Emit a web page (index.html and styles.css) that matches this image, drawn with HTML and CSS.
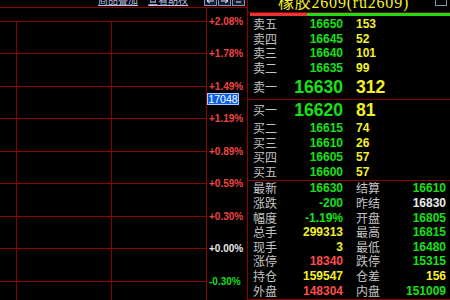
FILE: index.html
```html
<!DOCTYPE html>
<html lang="zh-CN">
<head>
<meta charset="utf-8">
<title>橡胶2609</title>
<link rel="stylesheet" href="styles.css">
</head>
<body>
<div class="app">
  <div class="left">
    <div class="toolbar">
      <a class="tlink">商品叠加</a>
      <a class="tlink">查看期权</a>
      <div class="tbtns">
        <span class="tbtn"><svg width="11" height="10" viewBox="0 0 11 10"><path d="M2 6h7M2 6l3-2M2 6l3 2" stroke="#e8ecf8" fill="none"/></svg></span>
        <span class="tbtn"><svg width="11" height="10" viewBox="0 0 11 10"><path d="M2 6h7M9 6l-3-2M9 6l-3 2" stroke="#e8ecf8" fill="none"/></svg></span>
        <span class="tbtn"><svg width="11" height="10" viewBox="0 0 11 10"><path d="M3 7h5" stroke="#e8ecf8" fill="none"/></svg></span>
      </div>
    </div>
    <div class="chart">
      <div class="plot">
        <svg width="206" height="292" viewBox="0 0 206 292" shape-rendering="crispEdges">
          <g stroke="#8c0000" stroke-width="1">
            <line x1="0" y1="13.5" x2="206" y2="13.5"/>
            <line x1="0" y1="45.5" x2="206" y2="45.5"/>
            <line x1="0" y1="78.5" x2="206" y2="78.5"/>
            <line x1="0" y1="110.5" x2="206" y2="110.5"/>
            <line x1="0" y1="143.5" x2="206" y2="143.5"/>
            <line x1="0" y1="175.5" x2="206" y2="175.5"/>
            <line x1="0" y1="208.5" x2="206" y2="208.5"/>
            <line x1="0" y1="240.5" x2="206" y2="240.5"/>
            <line x1="0" y1="273.5" x2="206" y2="273.5"/>
            <line x1="16.5" y1="13.5" x2="16.5" y2="292"/>
            <line x1="111.5" y1="13.5" x2="111.5" y2="292"/>
          </g>
        </svg>
      </div>
      <div class="axis">
        <span class="ax up">+2.08%</span>
        <span class="ax up">+1.78%</span>
        <span class="ax up">+1.49%</span>
        <span class="ax up">+1.19%</span>
        <span class="ax up">+0.89%</span>
        <span class="ax up">+0.59%</span>
        <span class="ax up">+0.30%</span>
        <span class="ax flat">+0.00%</span>
        <span class="ax down">-0.30%</span>
      </div>
      <div class="cross">17048</div>
    </div>
  </div>

  <div class="right">
    <div class="title">
      <span class="title-text">橡胶2609(ru2609)</span>
      <svg class="title-icon" width="12" height="12" viewBox="0 0 12 12"><rect x="0.5" y="0.5" width="11" height="11" fill="none" stroke="#8a94b0"/><rect x="2.5" y="0.5" width="7" height="4" fill="none" stroke="#8a94b0"/></svg>
    </div>
    <div class="bar"><div class="bar-red" style="width:57px"></div><div class="bar-green"></div></div>

    <div class="book sell">
      <div class="row"><span class="lbl">卖五</span><span class="price">16650</span><span class="vol">153</span></div>
      <div class="row"><span class="lbl">卖四</span><span class="price">16645</span><span class="vol">52</span></div>
      <div class="row"><span class="lbl">卖三</span><span class="price">16640</span><span class="vol">101</span></div>
      <div class="row"><span class="lbl">卖二</span><span class="price">16635</span><span class="vol">99</span></div>
      <div class="row big sell1"><span class="lbl">卖一</span><span class="price">16630</span><span class="vol">312</span></div>
    </div>

    <div class="book buy">
      <div class="row big buy1"><span class="lbl">买一</span><span class="price">16620</span><span class="vol">81</span></div>
      <div class="row"><span class="lbl">买二</span><span class="price">16615</span><span class="vol">74</span></div>
      <div class="row"><span class="lbl">买三</span><span class="price">16610</span><span class="vol">26</span></div>
      <div class="row"><span class="lbl">买四</span><span class="price">16605</span><span class="vol">57</span></div>
      <div class="row"><span class="lbl">买五</span><span class="price">16600</span><span class="vol">57</span></div>
    </div>

    <div class="stats">
      <span class="lbl">最新</span><span class="val g">16630</span><span class="lbl l2">结算</span><span class="val g">16610</span>
      <span class="lbl">涨跌</span><span class="val g">-200</span><span class="lbl l2">昨结</span><span class="val w">16830</span>
      <span class="lbl">幅度</span><span class="val g">-1.19%</span><span class="lbl l2">开盘</span><span class="val g">16805</span>
      <span class="lbl">总手</span><span class="val y">299313</span><span class="lbl l2">最高</span><span class="val g">16815</span>
      <span class="lbl">现手</span><span class="val y">3</span><span class="lbl l2">最低</span><span class="val g">16480</span>
      <span class="lbl">涨停</span><span class="val r">18340</span><span class="lbl l2">跌停</span><span class="val g">15315</span>
      <span class="lbl">持仓</span><span class="val y">159547</span><span class="lbl l2">仓差</span><span class="val y">156</span>
      <span class="lbl">外盘</span><span class="val r">148304</span><span class="lbl l2">内盘</span><span class="val g">151009</span>
    </div>
  </div>
</div>
</body>
</html>
```

FILE: styles.css
```css
* { box-sizing: border-box; }

body {
  margin: 0;
  background: #000;
  width: 450px;
  height: 300px;
  overflow: hidden;
  font-family: "Liberation Sans", "Noto Sans CJK SC", sans-serif;
}

.app {
  display: flex;
  height: 300px;
}

/* ---------- left: chart ---------- */
.left {
  width: 247px;
  display: flex;
  flex-direction: column;
}

.toolbar {
  height: 8px;
  border-bottom: 1px solid #8c0000;
  display: flex;
  align-items: flex-end;
  gap: 10px;
  padding: 0 2px 1px 98px;
  overflow: hidden;
}

.tlink {
  display: block;
  font: 10px/12px "Noto Sans CJK SC", sans-serif;
  color: #b4c0e4;
  text-decoration: underline;
  white-space: nowrap;
}

.tbtns {
  margin-left: auto;
  display: flex;
  gap: 1px;
}

.tbtn {
  width: 13px;
  height: 12px;
  border: 1px solid #8a94b0;
  background: #141c38;
  display: flex;
  align-items: flex-end;
  justify-content: center;
}

.tbtn svg { display: block; }

.chart {
  position: relative;
  flex: 1;
  display: flex;
}

.plot {
  width: 207px;
  border-right: 1px solid #8c0000;
}

.plot svg { display: block; }

.axis {
  width: 40px;
  display: flex;
  flex-direction: column;
  gap: 20.44px;
  padding: 8px 0 0 2px;
}

.ax {
  display: block;
  height: 12px;
  font: bold 10px/12px "Liberation Sans", sans-serif;
}

.ax.up { color: #f04444; }
.ax.flat { color: #e8e8e8; }
.ax.down { color: #18dc18; }

.cross {
  position: absolute;
  left: 207px;
  top: 85px;
  width: 32px;
  height: 12px;
  background: #0c5ee0;
  border: 1px solid #a8c8ff;
  color: #fff;
  font: 10.5px/10px "Liberation Sans", sans-serif;
  text-align: center;
}

/* ---------- right: quote panel ---------- */
.right {
  flex: 1;
  border-left: 1px solid #8c0000;
  display: flex;
  flex-direction: column;
}

.title {
  height: 13px;
  border-bottom: 1px solid #8c0000;
  display: flex;
  overflow: hidden;
  padding: 0 3px 0 4px;
}

.title-text {
  flex: 1;
  text-align: center;
  font: 16px/16px "Liberation Serif", "Noto Sans CJK SC", serif;
  letter-spacing: 0.8px;
  color: #f4f028;
  margin-top: -5px;
  white-space: nowrap;
}

.title-icon {
  display: block;
  margin-top: -6px;
}

.bar {
  height: 3px;
  display: flex;
  margin-left: 2px;
}

.bar-red { background: #e83434; }
.bar-green { flex: 1; background: #14e014; }

.book {
  display: flex;
  flex-direction: column;
  border-bottom: 1px solid #8c0000;
}

.sell { padding-top: 0.67px; }
.buy { padding-bottom: 0.67px; }

.row {
  height: 14.67px;
  display: grid;
  grid-template-columns: 40px 50px 1fr;
  align-items: center;
  padding-left: 5px;
}

.row.sell1 { height: 23.67px; }
.row.buy1 { height: 20.67px; }

.lbl {
  font: 12px/14px "Noto Sans CJK SC", sans-serif;
  color: #c4c4c4;
  white-space: nowrap;
}

.price {
  text-align: right;
  color: #18e018;
  font: bold 12px/14px "Liberation Sans", sans-serif;
}

.vol {
  padding-left: 13px;
  color: #f4f028;
  font: bold 12px/14px "Liberation Sans", sans-serif;
}

.row.big .price,
.row.big .vol {
  font-size: 17.5px;
  line-height: 20px;
}

.stats {
  display: grid;
  grid-template-columns: 40px 50px 53px 50px;
  grid-auto-rows: 14.67px;
  align-items: center;
  padding: 0 0 0.67px 5px;
  border-bottom: 1px solid #8c0000;
}

.l2 { padding-left: 13px; }

.val {
  text-align: right;
  font: bold 12px/14px "Liberation Sans", sans-serif;
  white-space: nowrap;
}

.val.g { color: #18e018; }
.val.y { color: #f4f028; }
.val.r { color: #ff4c4c; }
.val.w { color: #ececec; }
```
